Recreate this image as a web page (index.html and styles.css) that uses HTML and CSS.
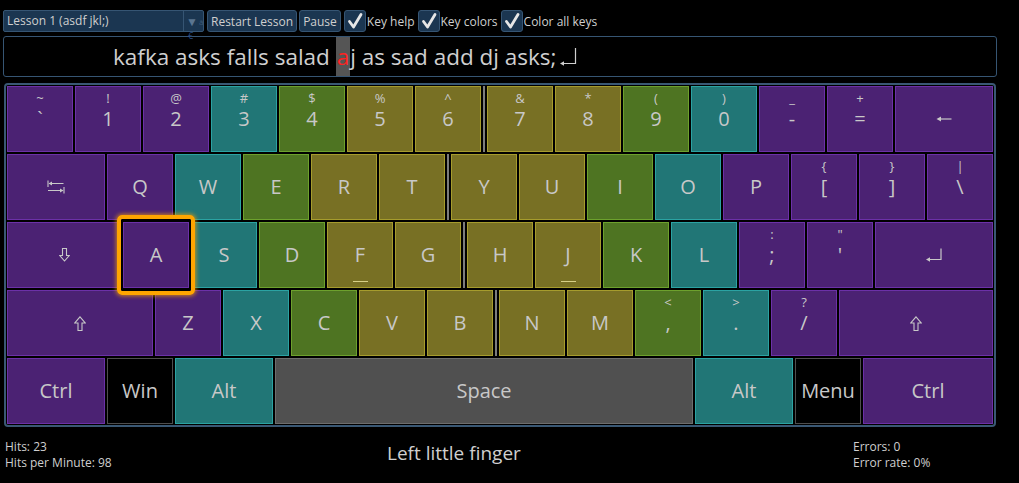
FILE: index.html
```html
<!DOCTYPE html>
<html lang="en">
<head>
    <meta charset="UTF-8">
    <title>Typing Trainer</title>
    <link rel="stylesheet" href="styles.css">
</head>
<body>
    <div class="toolbar">
        <div class="select">
            <span class="select-text">Lesson 1 (asdf jkl;)</span>
            <span class="select-arrow">▼<span class="junk">â</span></span>
            <span class="junk-euro">€</span>
        </div>
        <button class="btn">Restart Lesson</button>
        <button class="btn">Pause</button>
        <label class="check"><span class="box"><svg width="22" height="22" viewBox="0 0 22 22"><path d="M5.5 11.5 L9.5 17 L17 4.5" fill="none" stroke="#e6e6e6" stroke-width="2.8" stroke-linecap="round" stroke-linejoin="round"/></svg></span>Key help</label>
        <label class="check"><span class="box"><svg width="22" height="22" viewBox="0 0 22 22"><path d="M5.5 11.5 L9.5 17 L17 4.5" fill="none" stroke="#e6e6e6" stroke-width="2.8" stroke-linecap="round" stroke-linejoin="round"/></svg></span>Key colors</label>
        <label class="check"><span class="box"><svg width="22" height="22" viewBox="0 0 22 22"><path d="M5.5 11.5 L9.5 17 L17 4.5" fill="none" stroke="#e6e6e6" stroke-width="2.8" stroke-linecap="round" stroke-linejoin="round"/></svg></span>Color all keys</label>
    </div>

    <div class="lesson-text">
        <span class="done">kafka asks falls salad&nbsp;</span>
        <span class="cursor">a</span>
        <span class="todo">j as sad add dj asks;</span>
        <svg class="ret" width="20" height="20" viewBox="0 0 20 20"><path d="M17.5 2 V17.5 H3" fill="none" stroke="#cfcfcf" stroke-width="1.2"/><path d="M2 17.5 L6 15.3 V19.7 Z" fill="#cfcfcf"/></svg>
    </div>

    <div class="board">
        <div class="row">
            <div class="key pu"><span class="sh">~</span><span class="lb">`</span></div>
            <div class="key pu"><span class="sh">!</span><span class="lb">1</span></div>
            <div class="key pu"><span class="sh">@</span><span class="lb">2</span></div>
            <div class="key te"><span class="sh">#</span><span class="lb">3</span></div>
            <div class="key gr"><span class="sh">$</span><span class="lb">4</span></div>
            <div class="key ol"><span class="sh">%</span><span class="lb">5</span></div>
            <div class="key ol"><span class="sh">^</span><span class="lb">6</span></div>
            <div class="split"></div>
            <div class="key ol"><span class="sh">&amp;</span><span class="lb">7</span></div>
            <div class="key ol"><span class="sh">*</span><span class="lb">8</span></div>
            <div class="key gr"><span class="sh">(</span><span class="lb">9</span></div>
            <div class="key te"><span class="sh">)</span><span class="lb">0</span></div>
            <div class="key pu"><span class="sh">_</span><span class="lb">-</span></div>
            <div class="key pu"><span class="sh">+</span><span class="lb">=</span></div>
            <div class="key pu w98"><span class="lb"><svg width="16" height="10" viewBox="0 0 16 10"><path d="M2 5 H15.5" stroke="#c8c8c8" stroke-width="1.2"/><path d="M0.5 5 L5 2.5 V7.5 Z" fill="#c8c8c8"/></svg></span></div>
        </div>
        <div class="row">
            <div class="key pu w98"><span class="lb"><svg width="18" height="14" viewBox="0 0 18 14"><path d="M1 0.5 V7 M2 3.5 H16.5 M17 7 V13.5 M1 10.5 H16" fill="none" stroke="#c8c8c8" stroke-width="1.1"/><path d="M1.5 3.5 L5 1.5 V5.5 Z M16.5 10.5 L13 8.5 V12.5 Z" fill="#c8c8c8"/></svg></span></div>
            <div class="key pu"><span class="lb">Q</span></div>
            <div class="key te"><span class="lb">W</span></div>
            <div class="key gr"><span class="lb">E</span></div>
            <div class="key ol"><span class="lb">R</span></div>
            <div class="key ol"><span class="lb">T</span></div>
            <div class="split"></div>
            <div class="key ol"><span class="lb">Y</span></div>
            <div class="key ol"><span class="lb">U</span></div>
            <div class="key gr"><span class="lb">I</span></div>
            <div class="key te"><span class="lb">O</span></div>
            <div class="key pu"><span class="lb">P</span></div>
            <div class="key pu"><span class="sh">{</span><span class="lb">[</span></div>
            <div class="key pu"><span class="sh">}</span><span class="lb">]</span></div>
            <div class="key pu"><span class="sh">|</span><span class="lb">\</span></div>
        </div>
        <div class="row">
            <div class="key pu w114"><span class="lb"><svg width="11" height="14" viewBox="0 0 11 14"><path d="M3.5 0.5 H7.5 V7.5 H10.2 L5.5 13 L0.8 7.5 H3.5 Z" fill="none" stroke="#c8c8c8" stroke-width="1.1"/></svg></span></div>
            <div class="key pu next"><span class="lb">A</span></div>
            <div class="key te"><span class="lb">S</span></div>
            <div class="key gr"><span class="lb">D</span></div>
            <div class="key ol"><span class="lb">F</span><span class="bump"></span></div>
            <div class="key ol"><span class="lb">G</span></div>
            <div class="split"></div>
            <div class="key ol"><span class="lb">H</span></div>
            <div class="key ol"><span class="lb">J</span><span class="bump"></span></div>
            <div class="key gr"><span class="lb">K</span></div>
            <div class="key te"><span class="lb">L</span></div>
            <div class="key pu"><span class="sh">:</span><span class="lb">;</span></div>
            <div class="key pu"><span class="sh">"</span><span class="lb">'</span></div>
            <div class="key pu w118"><span class="lb"><svg width="18" height="14" viewBox="0 0 18 14"><path d="M16 0.5 V11.5 H4" fill="none" stroke="#c8c8c8" stroke-width="1.2"/><path d="M1 11.5 L5 9.3 V13.7 Z" fill="#c8c8c8"/></svg></span></div>
        </div>
        <div class="row">
            <div class="key pu w146"><span class="lb"><svg width="12" height="15" viewBox="0 0 12 15"><path d="M6 0.8 L11.2 7 H8 V14.5 H4 V7 H0.8 Z" fill="none" stroke="#c8c8c8" stroke-width="1.1"/></svg></span></div>
            <div class="key pu"><span class="lb">Z</span></div>
            <div class="key te"><span class="lb">X</span></div>
            <div class="key gr"><span class="lb">C</span></div>
            <div class="key ol"><span class="lb">V</span></div>
            <div class="key ol"><span class="lb">B</span></div>
            <div class="split"></div>
            <div class="key ol"><span class="lb">N</span></div>
            <div class="key ol"><span class="lb">M</span></div>
            <div class="key gr"><span class="sh">&lt;</span><span class="lb">,</span></div>
            <div class="key te"><span class="sh">&gt;</span><span class="lb">.</span></div>
            <div class="key pu"><span class="sh">?</span><span class="lb">/</span></div>
            <div class="key pu w154"><span class="lb"><svg width="12" height="15" viewBox="0 0 12 15"><path d="M6 0.8 L11.2 7 H8 V14.5 H4 V7 H0.8 Z" fill="none" stroke="#c8c8c8" stroke-width="1.1"/></svg></span></div>
        </div>
        <div class="row">
            <div class="key pu w98"><span class="lb">Ctrl</span></div>
            <div class="key bk"><span class="lb">Win</span></div>
            <div class="key te w98"><span class="lb">Alt</span></div>
            <div class="key sp w418"><span class="lb">Space</span></div>
            <div class="key te w98"><span class="lb">Alt</span></div>
            <div class="key bk"><span class="lb">Menu</span></div>
            <div class="key pu w130"><span class="lb">Ctrl</span></div>
        </div>
    </div>

    <div class="status">
        <div class="stats">
            <div>Hits: 23</div>
            <div>Hits per Minute: 98</div>
        </div>
        <div class="finger">Left little finger</div>
        <div class="stats">
            <div>Errors: 0</div>
            <div>Error rate: 0%</div>
        </div>
    </div>
</body>
</html>
```

FILE: styles.css
```css
body {
    margin: 0;
    width: 1019px;
    height: 483px;
    overflow: hidden;
    background-color: #000;
    color: #cfcfcf;
    font-family: "Open Sans", "Noto Sans", sans-serif;
}

/* top bar */
.toolbar {
    display: flex;
    align-items: center;
    height: 22px;
    padding: 10px 0 0 3px;
    font-size: 12px;
}

.select {
    position: relative;
    display: flex;
    width: 201px;
    height: 22px;
    box-sizing: border-box;
    background-color: #1b3651;
    border: 1px solid #365573;
    border-radius: 2px;
    margin-right: 3px;
}

.select-text {
    flex: 1;
    padding-left: 3px;
    line-height: 20px;
    white-space: nowrap;
}

.select-arrow {
    display: flex;
    align-items: center;
    width: 17px;
    padding-left: 2px;
    border-left: 1px solid #365573;
    color: #5a7590;
    font-size: 12px;
}

.junk {
    font-size: 8px;
    color: #3d5a78;
    margin-left: 1px;
}

.junk-euro {
    position: absolute;
    left: 184px;
    top: 20px;
    font-size: 9px;
    line-height: 9px;
    color: #2a4f8c;
}

.btn {
    height: 22px;
    padding: 0 3px;
    margin-right: 2px;
    background-color: #1b3651;
    border: 1px solid #365573;
    border-radius: 3px;
    color: #cfcfcf;
    font-family: inherit;
    font-size: 12px;
}

.check {
    display: flex;
    align-items: center;
    margin-left: 1px;
    margin-right: 2px;
}

.box {
    display: block;
    width: 22px;
    height: 22px;
    box-sizing: border-box;
    background-color: #1b3651;
    border: 1px solid #365573;
    border-radius: 3px;
    margin-right: 1px;
}

.box svg {
    display: block;
    margin: -1px;
}

/* lesson line */
.lesson-text {
    display: flex;
    align-items: center;
    width: 994px;
    height: 41px;
    box-sizing: border-box;
    margin: 4px 0 0 3px;
    padding-left: 109px;
    border: 1px solid #365573;
    border-radius: 3px;
    font-size: 22.5px;
    line-height: 26px;
    white-space: pre;
}

.cursor {
    align-self: stretch;
    display: flex;
    align-items: center;
    background-color: #555;
    color: #ff2222;
    padding: 0 1px;
}

.ret {
    margin-left: 1px;
    margin-top: -2px;
}

/* keyboard */
.board {
    display: flex;
    flex-direction: column;
    gap: 2px;
    width: 992px;
    box-sizing: border-box;
    margin: 6px 0 0 4px;
    padding: 1px;
    border: 2px solid #3a5874;
    border-radius: 4px;
}

.row {
    display: flex;
    gap: 2px;
    height: 66px;
}

.split {
    width: 2px;
    background-color: #7c7c7c;
}

.key {
    position: relative;
    display: grid;
    grid-template-rows: 1fr auto 1fr;
    justify-items: center;
    width: 66px;
    box-sizing: border-box;
    border: 1px solid;
    color: #c8c8c8;
}

.sh {
    grid-row: 1;
    align-self: start;
    margin-top: 3px;
    font-size: 13px;
    line-height: 16px;
}

.lb {
    grid-row: 2;
    font-size: 20px;
    line-height: 24px;
    display: flex;
    align-items: center;
}

.bump {
    grid-row: 3;
    align-self: end;
    width: 15px;
    height: 1px;
    margin-bottom: 5px;
    background-color: #d6cf86;
}

.w98 { width: 98px; }
.w114 { width: 114px; }
.w118 { width: 118px; }
.w130 { width: 130px; }
.w146 { width: 146px; }
.w154 { width: 154px; }
.w418 { width: 418px; }

.pu { background-color: #4b2273; border-color: #6c31a8; }
.te { background-color: #217676; border-color: #2ba3a3; }
.gr { background-color: #4e7422; border-color: #6da12d; }
.ol { background-color: #787024; border-color: #a69c2d; }
.sp { background-color: #505050; border-color: #6e6e6e; }
.bk { background-color: #000; border-color: #4e4e4e; }

/* next key to press */
.next {
    z-index: 1;
}

.next::before {
    content: "";
    position: absolute;
    top: -8px;
    bottom: -8px;
    left: -7px;
    right: -7px;
    border: 4px solid #ffa500;
    border-radius: 5px;
    box-shadow: 0 0 4px 1px rgba(255, 165, 0, 0.7), inset 0 0 0 1px #000;
}

/* bottom line */
.status {
    display: grid;
    grid-template-columns: 382px 466px auto;
    padding: 12px 0 0 5px;
}

.stats {
    font-size: 12px;
    line-height: 16px;
}

.finger {
    font-size: 19px;
    line-height: 24px;
    margin-top: 2px;
}
```
